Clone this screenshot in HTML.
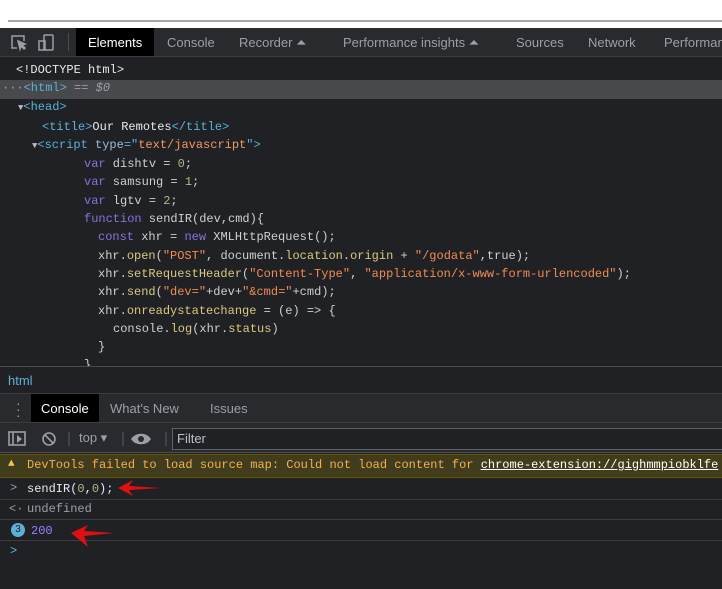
<!DOCTYPE html>
<html><head><style>
*{margin:0;padding:0;box-sizing:border-box}
body{width:722px;height:589px;background:#202124;overflow:hidden;position:relative;font-family:"Liberation Sans",sans-serif;color:#e8eaed}
.abs{position:absolute;white-space:nowrap}
.m{font-family:"Liberation Mono",monospace;font-size:12px}
.tab{position:absolute;top:28px;height:29px;line-height:29px;font-size:13px;color:#9aa0a6}
.t{color:#5db0d7}.an{color:#9bbbdc}.av{color:#f29766}.k{color:#9980ff;opacity:.85}.n{color:#a1c181}.s{color:#f28b54}.p{color:#d9c980}.tx{color:#e8eaed}
.code{color:#cfd0d0}
</style></head><body>
<div class="abs" style="left:0;top:0;width:722px;height:28px;background:#fff"></div>
<div class="abs" style="left:8px;top:20px;width:714px;height:2px;background:#a8a8a8"></div>
<div class="abs" style="left:0;top:28px;width:722px;height:29px;background:#292a2d;border-bottom:1px solid #3c3c3c"></div>
<svg class="abs" style="left:9px;top:33px" width="50" height="20" viewBox="0 0 50 20" fill="none" stroke="#9aa0a6" stroke-width="1.5">
<path d="M8 15H3V3h12v5"/><path d="M9 8l7 3-3 1 3 3-1 1-3-3-1 3z" fill="#9aa0a6"/>
<rect x="35" y="2" width="9" height="15" rx="1"/><rect x="30" y="8" width="6" height="9"/>
</svg>
<div class="abs" style="left:68px;top:33px;width:1px;height:18px;background:#4a4c50"></div>
<div class="abs" style="left:76px;top:28px;width:78px;height:28px;background:#000"></div>
<div class="tab" style="left:88px;color:#fff">Elements</div>
<div class="tab" style="left:167px">Console</div>
<div class="tab" style="left:239px">Recorder ⏶</div>
<div class="tab" style="left:343px">Performance insights ⏶</div>
<div class="tab" style="left:516px">Sources</div>
<div class="tab" style="left:588px">Network</div>
<div class="tab" style="left:664px">Performance</div>

<div class="abs" style="left:0;top:80px;width:722px;height:19px;background:#47494c"></div>
<div class="abs m" style="left:0;top:0;line-height:18.3px;padding-top:61px">
<div style="padding-left:16px" class="tx">&lt;!DOCTYPE html&gt;</div>
<div style="padding-left:2px;height:19px;line-height:19px"><span style="color:#9aa0a6">···</span><span class="t">&lt;html&gt;</span> <span style="color:#9aa0a6">== <i>$0</i></span></div>
<div style="padding-left:18px"><span style="color:#bbb;font-size:9px">▼</span><span class="t">&lt;head&gt;</span></div>
<div style="padding-left:42px"><span class="t">&lt;title&gt;</span><span class="tx">Our Remotes</span><span class="t">&lt;/title&gt;</span></div>
<div style="padding-left:32px"><span style="color:#bbb;font-size:9px">▼</span><span class="t">&lt;script </span><span class="an">type</span><span class="t">="</span><span class="av">text/javascript</span><span class="t">"&gt;</span></div>
<div class="code" style="padding-left:84px"><span class="k">var</span> dishtv = <span class="n">0</span>;</div>
<div class="code" style="padding-left:84px"><span class="k">var</span> samsung = <span class="n">1</span>;</div>
<div class="code" style="padding-left:84px"><span class="k">var</span> lgtv = <span class="n">2</span>;</div>
<div class="code" style="padding-left:84px"><span class="k">function</span> sendIR(dev,cmd){</div>
<div class="code" style="padding-left:98px"><span class="k">const</span> xhr = <span class="k">new</span> XMLHttpRequest();</div>
<div class="code" style="padding-left:98px">xhr.<span class="p">open</span>(<span class="s">"POST"</span>, document.<span class="p">location</span>.<span class="p">origin</span> + <span class="s">"/godata"</span>,true);</div>
<div class="code" style="padding-left:98px">xhr.<span class="p">setRequestHeader</span>(<span class="s">"Content-Type"</span>, <span class="s">"application/x-www-form-urlencoded"</span>);</div>
<div class="code" style="padding-left:98px">xhr.<span class="p">send</span>(<span class="s">"dev="</span>+dev+<span class="s">"&amp;cmd="</span>+cmd);</div>
<div class="code" style="padding-left:98px">xhr.<span class="p">onreadystatechange</span> = (e) =&gt; {</div>
<div class="code" style="padding-left:113px">console.<span class="p">log</span>(xhr.<span class="p">status</span>)</div>
<div class="code" style="padding-left:98px">}</div>
<div class="code" style="padding-left:84px">}</div>
</div>

<div class="abs" style="left:0;top:366px;width:722px;height:28px;background:#202124;border-top:1px solid #4a4c50;border-bottom:1px solid #3c3c3c"></div>
<div class="abs" style="left:8px;top:373px;font-size:13px;color:#5db0d7">html</div>
<div class="abs" style="left:0;top:394px;width:722px;height:29px;background:#292a2d;border-bottom:1px solid #3c3c3c"></div>
<div class="abs" style="left:16px;top:400px;font-size:14px;color:#9aa0a6;line-height:6px">·<br>·<br>·</div>
<div class="abs" style="left:31px;top:394px;width:68px;height:28px;background:#000"></div>
<div class="abs" style="left:41px;top:401px;font-size:13px;color:#fff">Console</div>
<div class="abs" style="left:110px;top:401px;font-size:13px;color:#9aa0a6">What's New</div>
<div class="abs" style="left:210px;top:401px;font-size:13px;color:#9aa0a6">Issues</div>

<div class="abs" style="left:0;top:423px;width:722px;height:30px;background:#292a2d;border-bottom:1px solid #4a4c50"></div>
<svg class="abs" style="left:8px;top:430px" width="160" height="18" fill="none" stroke="#9aa0a6" stroke-width="1.6">
<rect x="1" y="2" width="16" height="13"/><path d="M5 2v13"/><path d="M9 5l5 4-5 4z" fill="#9aa0a6" stroke="none"/>
<circle cx="41" cy="9" r="6"/><path d="M37 5l8 8"/>
<path d="M61 2v14" stroke="#4a4c50"/>
<path d="M124 9c4-6 14-6 18 0c-4 6-14 6-18 0z" fill="#9aa0a6"/><circle cx="133" cy="9" r="3" fill="#292a2d" stroke="none"/>
<path d="M115 2v14" stroke="#4a4c50"/><path d="M158 2v14" stroke="#4a4c50"/>
</svg>
<div class="abs" style="left:79px;top:430px;font-size:13px;color:#9aa0a6">top ▾</div>
<div class="abs" style="left:172px;top:428px;width:560px;height:22px;border:1px solid #5f6368;background:#202124"></div>
<div class="abs" style="left:177px;top:431px;font-size:13px;color:#bdc1c6">Filter</div>

<div class="abs" style="left:0;top:454px;width:722px;height:24px;background:#413c1b;border-top:1px solid #665500;border-bottom:1px solid #665500"></div>
<div class="abs m" style="left:8px;top:458px;color:#f2c84b;font-size:11px">▲</div>
<div class="abs m" style="left:27px;top:458px;color:#f2b157">DevTools failed to load source map: Could not load content for <span style="color:#fff;text-decoration:underline">chrome-extension://gighmmpiobklfe</span></div>
<div class="abs m" style="left:10px;top:481px;color:#9aa0a6">&gt;</div>
<div class="abs m" style="left:27px;top:482px;color:#e8eaed">sendIR(<span class="n">0</span>,<span class="n">0</span>);</div>
<div class="abs" style="left:0;top:499px;width:722px;height:1px;background:#3c3c3c"></div>
<div class="abs m" style="left:9px;top:502px;color:#9aa0a6">&lt;·</div>
<div class="abs m" style="left:27px;top:502px;color:#9aa0a6">undefined</div>
<div class="abs" style="left:0;top:519px;width:722px;height:1px;background:#3c3c3c"></div>
<div class="abs" style="left:11px;top:523px;width:14px;height:14px;border-radius:7px;background:#5db0d7;color:#202124;font-size:10px;text-align:center;line-height:14px">3</div>
<div class="abs m" style="left:31px;top:524px;color:#9980ff">200</div>
<div class="abs" style="left:0;top:540px;width:722px;height:1px;background:#3c3c3c"></div>
<div class="abs m" style="left:10px;top:544px;color:#5db0d7">&gt;</div>
<svg class="abs" style="left:115px;top:478px" width="50" height="20"><path d="M3 10L18 2L14 8L46 10L14 12L18 18Z" fill="#e01010"/></svg>
<svg class="abs" style="left:68px;top:523px" width="50" height="26"><path d="M3 10L20 2L16 8L46 10L16 13L20 24Z" fill="#e01010"/></svg>
</body></html>
